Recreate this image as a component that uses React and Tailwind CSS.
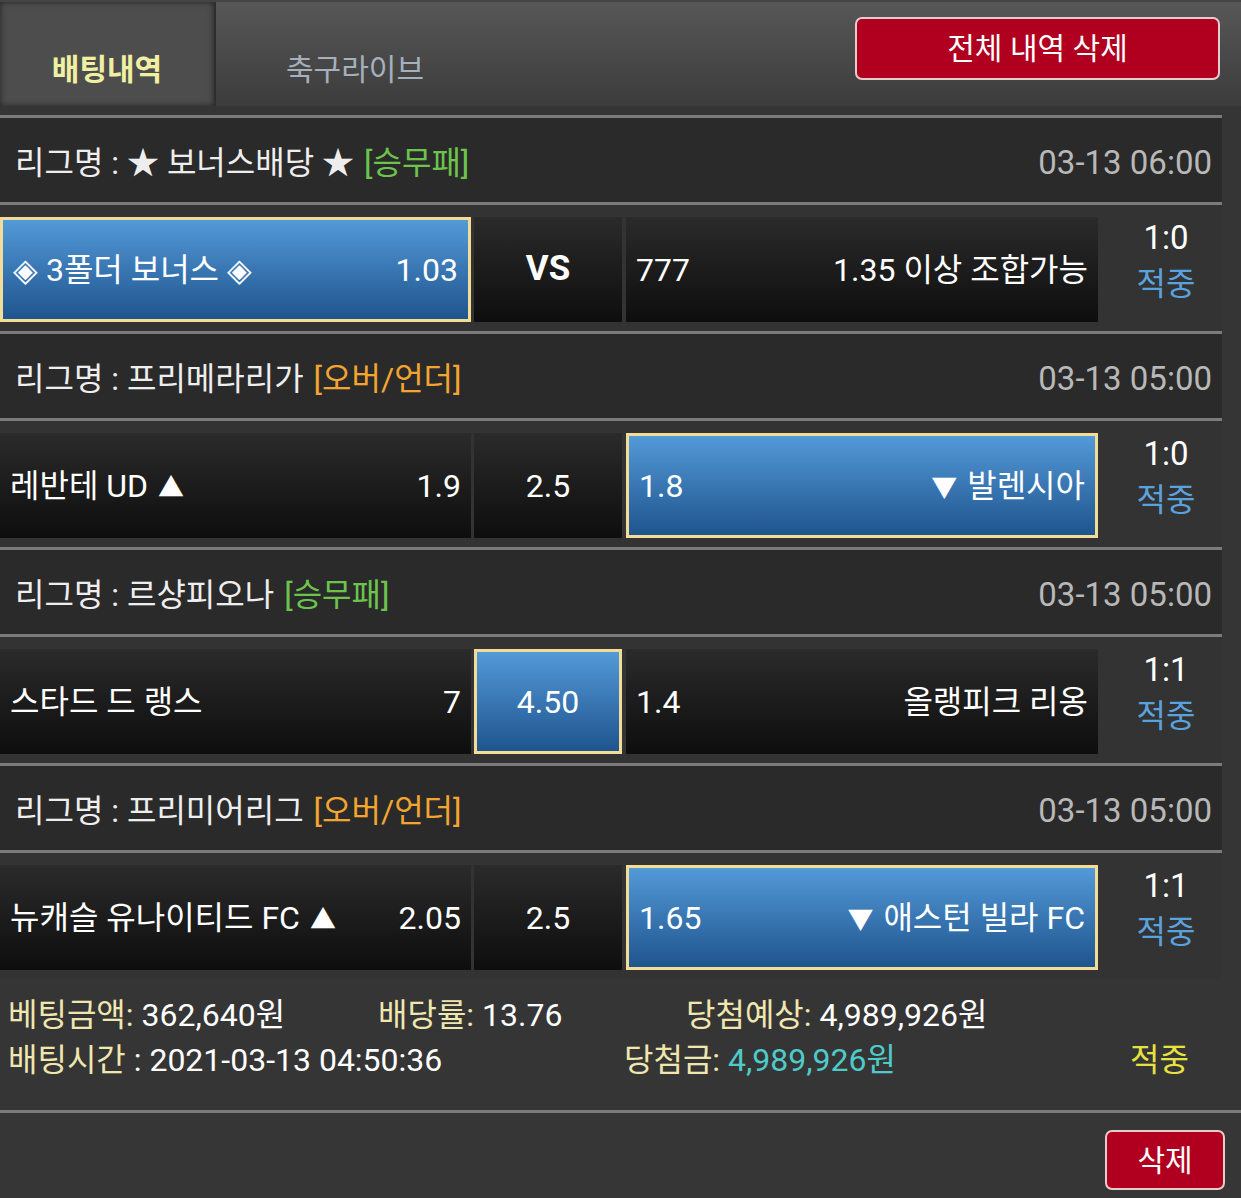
const games = [
    {
        league: '리그명 : ★ 보너스배당 ★',
        tag: '[승무패]',
        tagColor: 'text-[#6cc44c]',
        time: '03-13 06:00',
        home: '◈ 3폴더 보너스 ◈',
        homeOdd: '1.03',
        mid: 'VS',
        away: '1.35 이상 조합가능',
        awayOdd: '777',
        pick: 'home',
        score: '1:0',
    },
    {
        league: '리그명 : 프리메라리가',
        tag: '[오버/언더]',
        tagColor: 'text-[#f2a530]',
        time: '03-13 05:00',
        home: '레반테 UD',
        homeUp: true,
        homeOdd: '1.9',
        mid: '2.5',
        away: '발렌시아',
        awayDown: true,
        awayOdd: '1.8',
        pick: 'away',
        score: '1:0',
    },
    {
        league: '리그명 : 르샹피오나',
        tag: '[승무패]',
        tagColor: 'text-[#6cc44c]',
        time: '03-13 05:00',
        home: '스타드 드 랭스',
        homeOdd: '7',
        mid: '4.50',
        away: '올랭피크 리옹',
        awayOdd: '1.4',
        pick: 'mid',
        score: '1:1',
    },
    {
        league: '리그명 : 프리미어리그',
        tag: '[오버/언더]',
        tagColor: 'text-[#f2a530]',
        time: '03-13 05:00',
        home: '뉴캐슬 유나이티드 FC',
        homeUp: true,
        homeOdd: '2.05',
        mid: '2.5',
        away: '애스턴 빌라 FC',
        awayDown: true,
        awayOdd: '1.65',
        pick: 'away',
        score: '1:1',
    },
];

const cellBase = 'h-[105px] flex items-center text-white';
const darkCell = 'bg-linear-to-b from-[#2b2b2b] to-[#0e0e0e]';
const pickCell = 'bg-linear-to-b from-[#539ad9] to-[#1f558e] border-[3px] border-[#f2dc98]';

function MatchRow({ g }) {
    return (
        <div className="flex items-start pt-[12px] pb-[9px] h-[129px] border-t-[3px] border-[#7b7b7b] bg-[#333333]">
            <div className={`${cellBase} w-[471px] justify-between px-[10px] ${g.pick === 'home' ? pickCell : darkCell}`}>
                <span>
                    {g.home}
                    {g.homeUp && <span className="ml-[10px] text-[26px]">▲</span>}
                </span>
                <span>{g.homeOdd}</span>
            </div>
            <div className={`${cellBase} w-[148px] ml-[3px] justify-center ${g.mid === 'VS' ? 'font-bold text-[35px]' : ''} ${g.pick === 'mid' ? pickCell : darkCell}`}>
                {g.mid}
            </div>
            <div className={`${cellBase} w-[472px] ml-[4px] justify-between px-[10px] ${g.pick === 'away' ? pickCell : darkCell}`}>
                <span>{g.awayOdd}</span>
                <span>
                    {g.awayDown && <span className="mr-[10px] text-[26px]">▼</span>}
                    {g.away}
                </span>
            </div>
            <div className="w-[124px] pl-[12px] -mt-[2px] flex flex-col items-center leading-[46px] text-[33px]">
                <span className="text-white">{g.score}</span>
                <span className="text-[#5aa2de] text-[32px]">적중</span>
            </div>
        </div>
    );
}

export default function App() {
    return (
        <div className="w-[1241px] min-h-[1198px] bg-[#353535] text-[32px] font-['Roboto','Noto_Sans_CJK_KR',sans-serif]">
            {/* 상단 탭 */}
            <header className="h-[106px] flex bg-linear-to-b from-[#575757] to-[#3c3c3c] border-t-2 border-[#444] text-[30px]">
                <div className="w-[216px] h-[104px] flex items-center justify-center pt-[30px] bg-[#4d4d4d] border-r-2 border-[#2e2e2e] shadow-[inset_0_0_6px_rgba(0,0,0,0.55)]">
                    <span className="font-bold text-[#f0f0a2]">배팅내역</span>
                </div>
                <div className="w-[278px] flex items-center justify-center pt-[30px]">
                    <span className="text-[#a6b0bd]">축구라이브</span>
                </div>
                <button className="ml-auto mr-[21px] mt-[15px] w-[365px] h-[63px] rounded-[7px] bg-[#b1001f] border-2 border-[#e6cccc] text-white">
                    전체 내역 삭제
                </button>
            </header>

            <div className="h-[9px]" />

            <div className="w-[1222px]">
                {games.map((g, i) => (
                    <div key={i}>
                        <div className="h-[87px] border-t-[3px] border-[#7b7b7b] bg-[#2a2a2a] flex items-center justify-between pt-[5px] pl-[15px] pr-[10px]">
                            <div className="text-[#eeeeee]">
                                {g.league}
                                <span className={`ml-[10px] ${g.tagColor}`}>{g.tag}</span>
                            </div>
                            <span className="text-[#b8b8b8] text-[33px]">{g.time}</span>
                        </div>
                        <MatchRow g={g} />
                    </div>
                ))}
            </div>

            {/* 배팅 요약 */}
            <div className="h-[131px] pt-[14px] pl-[8px] leading-[45px]">
                <div className="flex">
                    <div className="w-[370px]">
                        <span className="text-[#efe6b0]">베팅금액:</span>
                        <span className="text-white"> 362,640원</span>
                    </div>
                    <div className="w-[308px]">
                        <span className="text-[#efe6b0]">배당률:</span>
                        <span className="text-white"> 13.76</span>
                    </div>
                    <div>
                        <span className="text-[#efe6b0]">당첨예상:</span>
                        <span className="text-white"> 4,989,926원</span>
                    </div>
                </div>
                <div className="flex">
                    <div className="w-[616px]">
                        <span className="text-[#efe6b0]">배팅시간</span>
                        <span className="text-white"> : 2021-03-13 04:50:36</span>
                    </div>
                    <div className="w-[506px]">
                        <span className="text-[#efe6b0]">당첨금:</span>
                        <span className="text-[#4fcaca]"> 4,989,926원</span>
                    </div>
                    <span className="text-[#e8e142]">적중</span>
                </div>
            </div>

            <div className="h-[88px] border-t-[3px] border-[#7b7b7b] bg-[#363636] flex justify-end items-start pt-[17px] pr-[16px]">
                <button className="w-[120px] h-[60px] rounded-[7px] bg-[#b1001f] border-2 border-[#e6cccc] text-white text-[30px]">
                    삭제
                </button>
            </div>
        </div>
    );
}
